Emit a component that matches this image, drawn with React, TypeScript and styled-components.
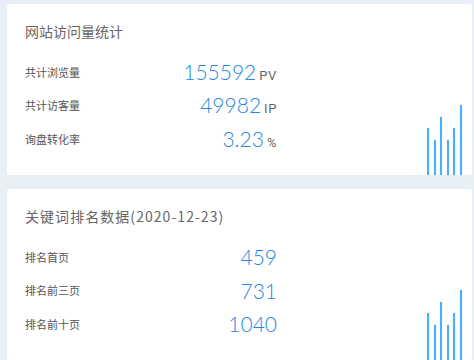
import React from "react";
import styled, { createGlobalStyle } from "styled-components";

const GlobalStyle = createGlobalStyle`
  html, body {
    margin: 0;
    padding: 0;
    background: #e9eff6;
  }
  body {
    font-family: "Noto Sans CJK SC", "Noto Sans", sans-serif;
  }
`;

const StyledPage = styled.div`
  width: 474px;
  height: 360px;
  overflow: hidden;
  box-sizing: border-box;
  padding: 4px 2px 0 7px;
  display: flex;
  flex-direction: column;
  gap: 14px;
`;

const StyledCard = styled.div`
  flex: 0 0 171px;
  height: 171px;
  box-sizing: border-box;
  background: #ffffff;
  border-radius: 3px;
  display: flex;
  padding: 0 10px 0 18px;
`;

const StyledContent = styled.div`
  width: 252px;
  display: flex;
  flex-direction: column;
  padding-top: 16px;
`;

const StyledTitle = styled.div<{ $spaced?: boolean }>`
  font-size: 14px;
  line-height: 22px;
  color: #666;
  letter-spacing: ${(p) => (p.$spaced ? "1.05px" : "0")};
  margin-bottom: 13px;
`;

const StyledRow = styled.div`
  height: 33.5px;
  display: flex;
  align-items: center;
  justify-content: space-between;
`;

const StyledLabel = styled.span`
  font-size: 11px;
  color: #555;
`;

const StyledValue = styled.span`
  display: flex;
  align-items: baseline;
  gap: 3px;
`;

const StyledNumber = styled.span`
  font-family: "Lato", "Noto Sans", sans-serif;
  font-weight: 300;
  font-size: 21px;
  color: #1f86e6;
  line-height: 1;
`;

const StyledUnit = styled.span`
  font-family: "Roboto", "Noto Sans", sans-serif;
  font-size: 13px;
  letter-spacing: 0.6px;
  color: #666;
`;

const StyledChart = styled.div`
  margin-left: auto;
  align-self: flex-end;
  display: flex;
  align-items: flex-end;
  gap: 4.6px;
`;

const StyledBar = styled.div`
  width: 2px;
  background: #4aaeff;
  box-shadow: 0 0 1px rgba(74, 174, 255, 0.6);
`;

type Row = { label: string; value: string; unit?: string };

const barHeights = [47, 35, 58, 35, 47, 70];

const StatCard = ({
  title,
  rows,
  spaced,
}: {
  title: string;
  rows: Row[];
  spaced?: boolean;
}) => (
  <StyledCard>
    <StyledContent>
      <StyledTitle $spaced={spaced}>{title}</StyledTitle>
      {rows.map((r) => (
        <StyledRow key={r.label}>
          <StyledLabel>{r.label}</StyledLabel>
          <StyledValue>
            <StyledNumber>{r.value}</StyledNumber>
            {r.unit && <StyledUnit>{r.unit}</StyledUnit>}
          </StyledValue>
        </StyledRow>
      ))}
    </StyledContent>
    <StyledChart>
      {barHeights.map((h, i) => (
        <StyledBar key={i} style={{ height: h }} />
      ))}
    </StyledChart>
  </StyledCard>
);

const App = () => {
  return (
    <>
      <GlobalStyle />
      <StyledPage>
        <StatCard
          title="网站访问量统计"
          rows={[
            { label: "共计浏览量", value: "155592", unit: "PV" },
            { label: "共计访客量", value: "49982", unit: "IP" },
            { label: "询盘转化率", value: "3.23", unit: "%" },
          ]}
        />
        <StatCard
          title="关键词排名数据(2020-12-23)"
          spaced
          rows={[
            { label: "排名首页", value: "459" },
            { label: "排名前三页", value: "731" },
            { label: "排名前十页", value: "1040" },
          ]}
        />
      </StyledPage>
    </>
  );
};

export default App;
